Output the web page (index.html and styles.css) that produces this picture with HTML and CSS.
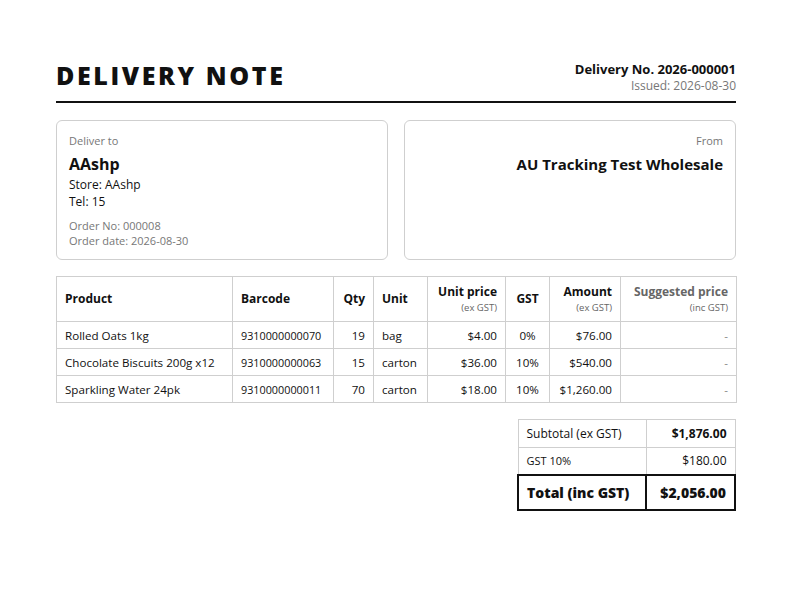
FILE: index.html
```html
<!DOCTYPE html>
<html>
<head>
<meta charset="utf-8">
<link rel="stylesheet" href="styles.css">
</head>
<body>
<div class="page">
  <header class="head">
    <h1 class="title">DELIVERY NOTE</h1>
    <div class="meta">
      <div class="docno">Delivery No. 2026-000001</div>
      <div class="issued">Issued: 2026-08-30</div>
    </div>
  </header>

  <section class="parties">
    <div class="card">
      <div class="label">Deliver to</div>
      <div class="name">AAshp</div>
      <div class="line">Store: AAshp</div>
      <div class="line">Tel: 15</div>
      <div class="order">
        <div class="muted">Order No: 000008</div>
        <div class="muted">Order date: 2026-08-30</div>
      </div>
    </div>
    <div class="card right">
      <div class="label">From</div>
      <div class="name">AU Tracking Test Wholesale</div>
    </div>
  </section>

  <table class="items">
    <colgroup>
      <col class="c-prod"><col class="c-bar"><col class="c-qty"><col class="c-unit"><col class="c-price"><col class="c-gst"><col class="c-amt"><col class="c-sug">
    </colgroup>
    <thead>
      <tr>
        <th>Product</th>
        <th>Barcode</th>
        <th class="r">Qty</th>
        <th>Unit</th>
        <th class="r">Unit price<span class="sub">(ex GST)</span></th>
        <th class="c">GST</th>
        <th class="r">Amount<span class="sub">(ex GST)</span></th>
        <th class="r sug">Suggested price<span class="sub">(inc GST)</span></th>
      </tr>
    </thead>
    <tbody>
      <tr>
        <td>Rolled Oats 1kg</td><td class="bc">9310000000070</td><td class="r">19</td><td>bag</td><td class="r">$4.00</td><td class="c">0%</td><td class="r">$76.00</td><td class="r dash">-</td>
      </tr>
      <tr>
        <td>Chocolate Biscuits 200g x12</td><td class="bc">9310000000063</td><td class="r">15</td><td>carton</td><td class="r">$36.00</td><td class="c">10%</td><td class="r">$540.00</td><td class="r dash">-</td>
      </tr>
      <tr>
        <td>Sparkling Water 24pk</td><td class="bc">9310000000011</td><td class="r">70</td><td>carton</td><td class="r">$18.00</td><td class="c">10%</td><td class="r">$1,260.00</td><td class="r dash">-</td>
      </tr>
    </tbody>
  </table>

  <div class="totals-wrap">
    <table class="totals">
      <tr><td>Subtotal (ex GST)</td><td class="r b">$1,876.00</td></tr>
      <tr class="small"><td>GST 10%</td><td class="r">$180.00</td></tr>
      <tr class="grand"><td>Total (inc GST)</td><td class="r">$2,056.00</td></tr>
    </table>
  </div>
</div>
</body>
</html>
```

FILE: styles.css
```css
* { box-sizing: border-box; }
html, body { margin: 0; background: #fff; }
body {
  font-family: "Open Sans", "Noto Sans", "Liberation Sans", sans-serif;
  color: #111;
  font-size: 12px;
}
.page { width: 790px; padding: 56px 54px 0 56px; }

.head {
  display: flex;
  justify-content: space-between;
  align-items: flex-end;
  border-bottom: 2px solid #111;
  padding-top: 4px;
  padding-bottom: 11px;
}
.title {
  margin: 0;
  font-size: 25px;
  font-weight: 800;
  letter-spacing: 2.6px;
  line-height: 30px;
  color: #111;
}
.meta { text-align: right; margin-bottom: -4px; }
.docno { font-size: 13px; font-weight: 700; line-height: 18px; }
.issued { font-size: 12px; color: #777; line-height: 16px; }

.parties {
  display: grid;
  grid-template-columns: 1fr 1fr;
  gap: 16px;
  margin-top: 17px;
}
.card {
  border: 1px solid #cfcfcf;
  border-radius: 6px;
  padding: 12px 12px 10px 12px;
  height: 140px;
}
.card.right { text-align: right; }
.label { font-size: 11px; color: #777; line-height: 16px; }
.name { font-size: 16px; font-weight: 700; line-height: 22px; margin-top: 4px; margin-bottom: 1px; }
.right .name { font-size: 15px; }
.line { font-size: 12px; line-height: 17px; margin-top: 0; }
.order { margin-top: 8px; }
.muted { font-size: 11px; color: #777; line-height: 15px; }

.items {
  width: 680px;
  margin-top: 16px;
  border-collapse: collapse;
  table-layout: fixed;
}
.c-prod { width: 176px; }
.c-bar { width: 101px; }
.c-qty { width: 40px; }
.c-unit { width: 54px; }
.c-price { width: 78px; }
.c-gst { width: 44px; }
.c-amt { width: 71px; }
.c-sug { width: 116px; }
.items th, .items td {
  border: 1px solid #cfcfcf;
  padding: 0 8px;
  text-align: left;
  vertical-align: middle;
}
.items th {
  height: 45px;
  font-size: 12px;
  font-weight: 700;
  line-height: 16px;
}
.items td { height: 27px; font-size: 11.6px; }
.items td.bc { font-size: 10.8px; }
.items .r { text-align: right; }
.items .c { text-align: center; }
.sub { display: block; font-size: 9.5px; font-weight: 400; color: #666; line-height: 15px; }
.items th.sug { color: #666; }
.dash { color: #888; }

.totals-wrap { display: flex; justify-content: flex-end; margin-top: 16px; }
.totals {
  width: 219px;
  border-collapse: collapse;
}
.totals td {
  border: 1px solid #cfcfcf;
  padding: 0 8px;
  height: 28px;
  font-size: 12px;
}
.totals td:first-child { width: 128px; }
.totals .r { text-align: right; }
.totals .b { font-weight: 700; }
.totals .small td { height: 27px; font-size: 11px; }
.totals .small td.r { font-size: 12px; }
.totals .grand td {
  border: 2px solid #111;
  height: 35px;
  font-size: 14px;
  font-weight: 800;
}
```
